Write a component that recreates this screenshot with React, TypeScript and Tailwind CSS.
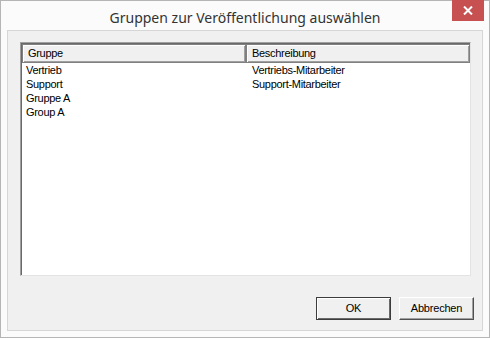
import React from "react";

const rows = [
  { name: "Vertrieb", desc: "Vertriebs-Mitarbeiter" },
  { name: "Support", desc: "Support-Mitarbeiter" },
  { name: "Gruppe A", desc: "" },
  { name: "Group A", desc: "" },
];

function DialogButton({ label, isDefault }: { label: string; isDefault?: boolean }) {
  return (
    <button
      type="button"
      className={`w-[75px] h-[23px] bg-[#f0f0f0] text-[11px] tracking-[-0.2px] text-black flex items-center justify-center ${
        isDefault
          ? "border border-[#3c3c3c] shadow-[inset_1px_1px_0_#ffffff,inset_-1px_-1px_0_#696969]"
          : "border border-t-white border-l-white border-r-[#505050] border-b-[#505050] shadow-[inset_-1px_-1px_0_#a0a0a0]"
      }`}
    >
      {label}
    </button>
  );
}

export default function App() {
  return (
    <div
      className="w-[490px] h-[338px] bg-[#fbfbfb] border border-[#b5b5b5] flex flex-col"
      style={{ fontFamily: '"Liberation Sans", Arial, sans-serif' }}
    >
      {/* Title bar */}
      <div className="relative h-[29px] flex items-center justify-center">
        <span
          className="text-[14px] text-[#333333] pt-[4px]"
          style={{ fontFamily: '"Noto Sans", "Open Sans", sans-serif' }}
        >
          Gruppen zur Veröffentlichung auswählen
        </span>
        <button
          type="button"
          className="absolute right-[5px] top-[-1px] w-[32px] h-[21px] bg-[#c75050] flex items-center justify-center"
        >
          <svg width="10" height="9" viewBox="0 0 10 9">
            <path d="M1 0.5 L9 8.5 M9 0.5 L1 8.5" stroke="#ffffff" strokeWidth="2" />
          </svg>
        </button>
      </div>

      {/* Client area */}
      <div className="flex-1 mx-[6px] mb-[6px] border border-[#d6d6d6] bg-[#f0f0f0] pl-[12px] pr-[8px] pt-[11px] flex flex-col">
        {/* List view */}
        <div className="w-[451px] h-[234px] bg-white border border-t-[#a0a0a0] border-l-[#a0a0a0] border-r-[#e3e3e3] border-b-[#e3e3e3] shadow-[inset_1px_1px_0_#696969] pl-[1px] pt-[1px]">
          <div className="flex h-[19px] text-[11px] tracking-[-0.3px] text-black">
            <div className="w-[224px] bg-[#f0f0f0] border border-[#808080] shadow-[inset_1px_1px_0_#ffffff,inset_-1px_-1px_0_#a0a0a0] flex items-center pl-[5px]">
              Gruppe
            </div>
            <div className="w-[224px] bg-[#f0f0f0] border border-[#808080] shadow-[inset_1px_1px_0_#ffffff,inset_-1px_-1px_0_#a0a0a0] flex items-center pl-[5px]">
              Beschreibung
            </div>
          </div>
          <div className="flex flex-col text-[11px] tracking-[-0.3px] text-black">
            {rows.map((r) => (
              <div key={r.name} className="flex h-[14px] items-center">
                <div className="w-[224px] pl-[4px]">{r.name}</div>
                <div className="w-[224px] pl-[6px]">{r.desc}</div>
              </div>
            ))}
          </div>
        </div>

        {/* Buttons */}
        <div className="flex justify-end gap-[8px] mt-[21px]">
          <DialogButton label="OK" isDefault />
          <DialogButton label="Abbrechen" />
        </div>
      </div>
    </div>
  );
}
